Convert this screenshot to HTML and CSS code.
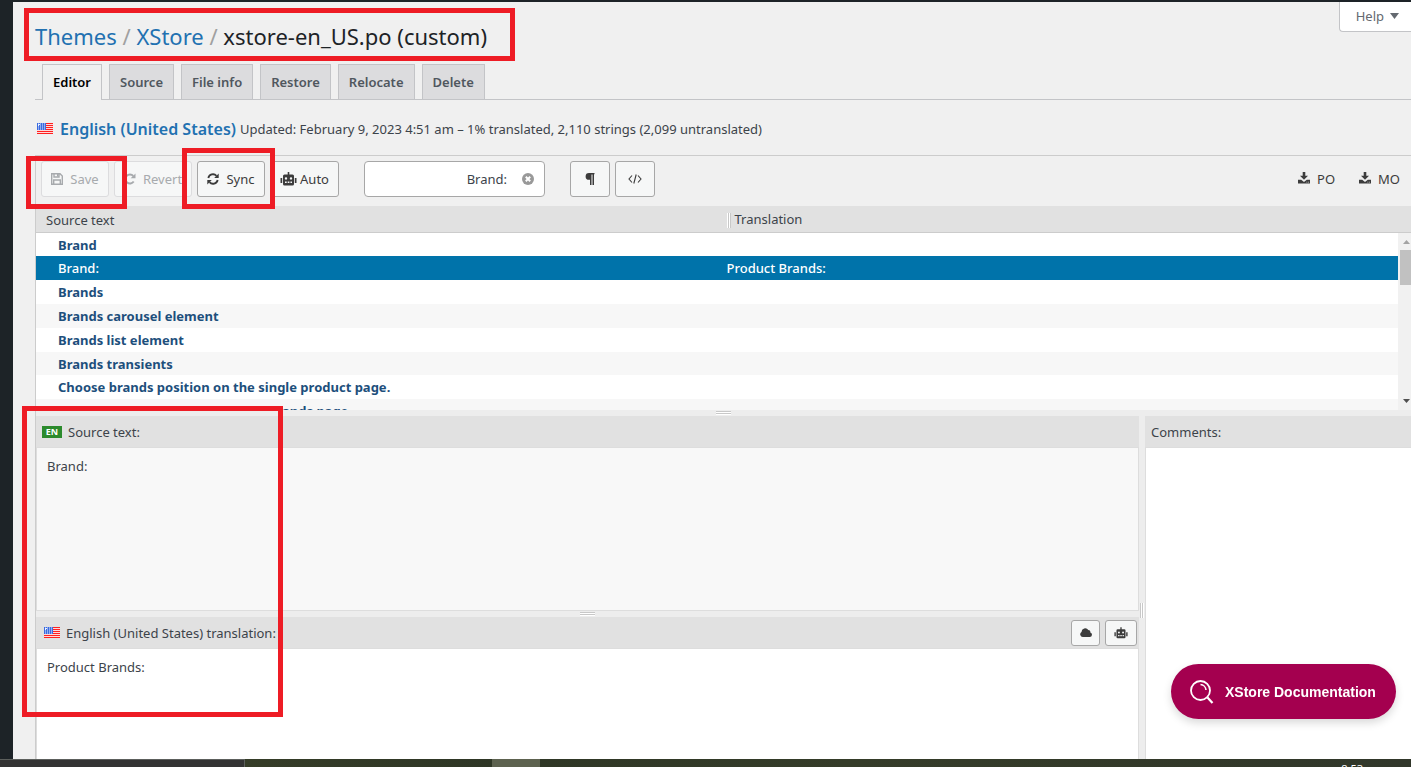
FILE: index.html
```html
<!DOCTYPE html>
<html lang="en">
<head>
<meta charset="utf-8">
<title>xstore-en_US.po (custom)</title>
<link rel="stylesheet" href="styles.css">
</head>
<body>
<svg class="defs" aria-hidden="true">
  <symbol id="robot" viewBox="0 0 17 14"><path d="M7.700 0h1.600v2.500h3.200a1.500 1.500 0 0 1 1.500 1.500v8a1.500 1.500 0 0 1-1.500 1.500h-8A1.500 1.500 0 0 1 3 12V4a1.500 1.500 0 0 1 1.500-1.500h3.200zM0.500 6h1.700v5H0.500zM14.800 6h1.700v5h-1.700zM6 5.200a1.200 1.200 0 1 0 0 2.400 1.200 1.200 0 0 0 0-2.400zm5 0a1.200 1.200 0 1 0 0 2.400 1.200 1.200 0 0 0 0-2.400zM5 9.500V11h1.700V9.500zm2.700 0V11h1.700V9.500zm2.700 0V11H12V9.500z" fill="currentColor" fill-rule="evenodd"/></symbol>
  <symbol id="download" viewBox="0 0 12 12"><path d="M4.700 0h2.600v3.800H10L6 7.800 2 3.800h2.700zM0 7.800h3.200L6 10l2.800-2.200H12V11.500H0zM8.500 9.700v.8h.8v-.8zm1.600 0v.8h.8v-.8z" fill="currentColor" fill-rule="evenodd"/></symbol>
</svg>
<div class="adminbar"></div>
<div class="shell">
  <nav class="sidebar" aria-label="Admin menu"></nav>
  <main class="content">
    <header class="top">
      <h1><a href="#">Themes</a> <span>/</span> <a href="#">XStore</a> <span>/</span> xstore-en_US.po (custom)</h1>
      <button class="help" type="button">Help <svg width="9" height="6" viewBox="0 0 9 6"><path d="M0 0h9L4.500 6z" fill="currentColor"/></svg></button>
    </header>
    <nav class="tabs">
      <a class="active" href="#">Editor</a><a href="#">Source</a><a href="#">File info</a><a href="#">Restore</a><a href="#">Relocate</a><a href="#">Delete</a>
    </nav>
    <div class="locale">
      <span class="flag"></span>
      <h2><a href="#">English (United States)</a></h2>
      <p>Updated: February 9, 2023 4:51 am – 1% translated, 2,110 strings (2,099 untranslated)</p>
    </div>
    <section class="editor">
      <div class="toolbar">
        <div class="group">
          <button type="button" disabled><svg width="12" height="12" viewBox="0 0 12 12"><path d="M.700.700h8.300l2.300 2.300v8.300H.700zM3 .700v3.300h5V.700M2.700 11V7h6.600v4" fill="none" stroke="currentColor" stroke-width="1.400"/><path d="M6 1h1.500v2.500H6z" fill="currentColor"/></svg>Save</button>
          <button class="revert" type="button" disabled><svg width="12" height="12" viewBox="0 0 12 12"><path d="M9.700 8.500A4.500 4.500 0 1 1 9.300 3" fill="none" stroke="currentColor" stroke-width="1.900"/><path d="M11.500.500v4.800H6.700z" fill="currentColor"/></svg>Revert</button>
          <button type="button"><svg width="12" height="12" viewBox="0 0 12 12"><path d="M1.300 5A4.800 4.800 0 0 1 9.500 2.800M10.700 7A4.800 4.800 0 0 1 2.500 9.200" fill="none" stroke="currentColor" stroke-width="1.800"/><path d="M11.700.500v4.500H7.200zM.300 11.500V7h4.500z" fill="currentColor"/></svg>Sync</button>
          <button class="auto" type="button"><svg width="17" height="14"><use href="#robot"/></svg>Auto</button>
        </div>
        <div class="search">
          <input type="text" value="Brand:" aria-label="Filter translations">
          <button type="button" aria-label="Clear filter"><svg width="12" height="12" viewBox="0 0 12 12"><circle cx="6" cy="6" r="6" fill="#999"/><path d="M3.800 3.800l4.400 4.400M8.200 3.800L3.800 8.200" stroke="#fff" stroke-width="2"/></svg></button>
        </div>
        <div class="group">
          <button class="square" type="button" aria-label="Toggle invisibles"><svg width="10" height="12" viewBox="0 0 10 12"><path d="M4 0h5.500v1.300H9V12H7.500V1.500h-1V12H5V6.800H4A3.400 3.400 0 0 1 4 0z" fill="currentColor"/></svg></button>
          <button class="square" type="button" aria-label="Toggle code view"><svg width="14" height="10" viewBox="0 0 14 10"><path d="M4 1.500L1 5l3 3.500M10 1.500L13 5l-3 3.500M8.200.500L5.800 9.500" fill="none" stroke="currentColor" stroke-width="1.100"/></svg></button>
        </div>
        <div class="downloads">
          <button type="button"><svg width="12" height="12"><use href="#download"/></svg>PO</button>
          <button type="button"><svg width="12" height="12"><use href="#download"/></svg>MO</button>
        </div>
      </div>
      <div class="list">
        <table>
          <thead><tr><th>Source text</th><th class="grip">Translation</th></tr></thead>
          <tbody>
            <tr><td>Brand</td><td></td></tr>
            <tr class="selected"><td>Brand:</td><td>Product Brands:</td></tr>
            <tr><td>Brands</td><td></td></tr>
            <tr><td>Brands carousel element</td><td></td></tr>
            <tr><td>Brands list element</td><td></td></tr>
            <tr><td>Brands transients</td><td></td></tr>
            <tr><td>Choose brands position on the single product page.</td><td></td></tr>
            <tr><td>Choose sidebars position on the brands page.</td><td></td></tr>
          </tbody>
        </table>
        <div class="scroll">
          <div class="track"><svg width="7" height="4" viewBox="0 0 7 4"><path d="M0 4h7L3.500 0z" fill="#a3a3a3"/></svg><i class="thumb"></i><svg width="7" height="4" viewBox="0 0 7 4"><path d="M0 0h7L3.500 4z" fill="#505050"/></svg></div>
        </div>
      </div>
      <div class="split"></div>
      <div class="panes">
        <div class="left">
          <div class="pane source">
            <div class="bar"><span class="lang">EN</span><label for="src">Source text:</label></div>
            <textarea id="src" readonly>Brand:</textarea>
          </div>
          <div class="split"></div>
          <div class="pane target">
            <div class="bar"><span class="flag"></span><label for="dst">English (United States) translation:</label>
              <div class="tools">
                <button type="button" aria-label="Cloud suggestions"><svg width="12" height="9" viewBox="0 0 12 9"><path d="M2.800 9A2.700 2.700 0 0 1 1.500 4 3.700 3.700 0 0 1 8.300 2 2.100 2.100 0 0 1 10.300 4.500 2.300 2.300 0 0 1 9.800 9z" fill="currentColor"/></svg></button>
                <button type="button" class="wide" aria-label="Auto-translate"><svg width="14" height="12"><use href="#robot"/></svg></button>
              </div>
            </div>
            <textarea id="dst">Product Brands:</textarea>
          </div>
        </div>
        <div class="vsplit"></div>
        <div class="pane comments">
          <div class="bar"><label for="com">Comments:</label></div>
          <textarea id="com"></textarea>
        </div>
      </div>
    </section>
  </main>
</div>
<footer class="taskbar"><div class="field"></div><div class="app"></div><time>8:53</time></footer>
<button class="docs" type="button"><svg width="24" height="24" viewBox="0 0 24 24"><g fill="none" stroke="#fff" stroke-width="1.800"><circle cx="10.500" cy="10.500" r="9.500"/><path d="M17.500 17.500l5 5.500" stroke-width="2.200"/><path d="M10.500 4.500a6 6 0 0 1 5.500 5.500" stroke-width="1.600"/></g></svg>XStore Documentation</button>
<div class="mark mark-title"></div>
<div class="mark mark-save"></div>
<div class="mark mark-sync"></div>
<div class="mark mark-panes"></div>
</body>
</html>
```

FILE: styles.css
```css
* { box-sizing: border-box; }
body {
  margin: 0;
  height: 100vh;
  display: flex;
  flex-direction: column;
  overflow: hidden;
  background: #f0f0f0;
  color: #3c434a;
  font: 13px/20px "Noto Sans", sans-serif;
}
button, input, textarea { font: inherit; color: inherit; margin: 0; }
button { cursor: pointer; }
svg { flex: none; display: block; }
a { color: #2271b1; text-decoration: none; }
.defs { position: absolute; width: 0; height: 0; }
.flag {
  flex: none;
  width: 16px;
  height: 11px;
  background:
    radial-gradient(circle, #e4ecff 0 1px, transparent 1px) 0 0 / 3px 3px no-repeat,
    linear-gradient(#3a6be0, #3a6be0) 0 0 / 9px 7px no-repeat,
    repeating-linear-gradient(#ff2020 0 1px, #ffd9d9 1px 2px);
}
.flag::before {
  content: "";
  display: block;
  width: 9px;
  height: 7px;
  background: repeating-linear-gradient(90deg, transparent 0 1px, rgba(255, 255, 255, .45) 1px 2px);
}

.adminbar { flex: none; height: 2px; background: #1d2327; }
.shell { flex: 1; min-height: 0; display: flex; }
.sidebar { flex: none; width: 13px; background: #1d2327; }
.content { flex: 1; min-width: 0; display: flex; flex-direction: column; padding-left: 22px; }

.top { display: flex; justify-content: space-between; align-items: flex-start; height: 62px; }
h1 { margin: 0; padding-top: 19px; font-size: 22px; line-height: 30px; font-weight: 400; color: #1d2327; }
h1 span { color: #a0a0a0; }
.help {
  display: flex; align-items: center; gap: 6px;
  height: 30px; padding: 0 12px 1px 16px;
  background: #fff; color: #646970;
  border: 1px solid #c3c4c7; border-width: 0 0 1px 1px; border-radius: 0 0 0 4px;
}

.tabs { display: flex; gap: 7px; height: 36px; padding-left: 7px; border-bottom: 1px solid #c3c4c7; }
.tabs a {
  height: 35px; padding: 0 10px; line-height: 34px;
  border: 1px solid #c3c4c7; border-bottom: 0;
  background: #dcdcde; color: #50575e; font-weight: 600;
}
.tabs .active { height: 36px; background: #f0f0f0; color: #000; }

.locale { display: flex; align-items: center; gap: 4px; height: 55px; padding: 2px 0 0 2px; }
.locale h2 { margin: 0 0 0 3px; font-size: 16px; line-height: 24px; font-weight: 600; }
.locale p { margin: 0; }

.editor { flex: 1; min-height: 0; display: flex; flex-direction: column; border: 1px solid #ccc; border-width: 1px 0 0 1px; }
.toolbar { flex: none; display: flex; gap: 25px; height: 50px; padding: 5px 11px 0 5px; }
.group { display: flex; gap: 5px; }
.toolbar button {
  display: flex; align-items: center; justify-content: center; gap: 7px;
  height: 36px; width: 68px; padding: 0;
  background: #f6f7f7; color: #3c3c3c;
  border: 1px solid #a7a7a7; border-radius: 3px;
}
.toolbar button:disabled { color: #a7aaad; border-color: #dcdcde; }
.toolbar .revert { width: 78px; }
.toolbar .auto { width: 69px; gap: 3px; }
.toolbar .square { width: 40px; }
.search { position: relative; display: flex; width: 181px; height: 36px; }
.search input { width: 100%; padding: 0 37px 0 10px; text-align: right; background: #fff; border: 1px solid #a7a7a7; border-radius: 4px; }
.toolbar .search button { position: absolute; right: 6px; top: 8px; width: 22px; height: 20px; border: 0; background: none; }
.downloads { margin-left: auto; display: flex; gap: 24px; }
.toolbar .downloads button { width: auto; border: 0; background: none; }
.downloads svg { margin-bottom: 3px; }

.list { flex: 204 1 0; min-height: 0; display: flex; align-items: flex-start; overflow: hidden; background: #fff; }
table { flex: 1; border-spacing: 0; table-layout: fixed; }
th { height: 27px; padding: 1px 10px 0; text-align: left; font-weight: 400; background: #e1e1e1; border-bottom: 1px solid #ccc; }
th:first-child { width: 50.7%; }
th.grip { width: auto; padding-left: 0; }
th.grip::before { content: ""; display: inline-block; width: 4px; height: 15px; margin: 0 4px 2px 0; vertical-align: middle; background: repeating-linear-gradient(90deg, #fff 0 1px, #c8c8c8 1px 2px); }
td { height: 24px; padding: 0; line-height: 22px; font-weight: 700; color: #1d4f7c; white-space: nowrap; }
td:first-child { padding-left: 22px; }
tbody tr:nth-child(5n+1) td { height: 23px; }
tbody tr:nth-child(even) { background: #f7f7f7; }
tbody tr.selected { background: #0073aa; }
.selected td { color: #fff; font-weight: 500; }
.scroll { flex: none; align-self: stretch; width: 13px; padding-top: 26px; background: #e1e1e1; }
.track { height: 100%; display: flex; flex-direction: column; align-items: flex-end; padding: 7px 1px 7px 2px; border-top: 1px solid #ccc; background: #f1f1f1; }
.thumb { flex: none; align-self: stretch; height: 35px; margin: 6px -1px auto 0; background: #c1c1c1; }

.split { flex: none; height: 6px; background: #ededed; display: flex; justify-content: center; align-items: center; }
.split::after { content: ""; width: 15px; height: 4px; background: repeating-linear-gradient(#c8c8c8 0 1px, #fff 1px 2px); }
.panes { flex: 343 1 0; min-height: 0; display: flex; }
.left { flex: 1103 1 0; display: flex; flex-direction: column; }
.vsplit { flex: none; width: 6px; display: flex; align-items: center; justify-content: center; background: #ededed; padding-top: 45px; }
.vsplit::after { content: ""; width: 4px; height: 15px; background: repeating-linear-gradient(90deg, #c8c8c8 0 1px, #fff 1px 2px); }
.pane { min-height: 0; display: flex; flex-direction: column; }
.source { flex: 195 1 0; }
.target { flex: 142 1 0; }
.comments { flex: 266 1 0; }
.bar { flex: none; display: flex; align-items: center; gap: 6px; height: 31px; padding: 0 2px 0 6px; background: #e1e1e1; }
.target .bar { padding-left: 8px; }
.lang { width: 20px; height: 12px; background: #2c8a2c; color: #fff; font-size: 9px; line-height: 12px; font-weight: 700; text-align: center; }
.pane textarea { flex: 1; width: 100%; min-height: 0; padding: 8px 10px; resize: none; border: 1px solid #ddd; border-radius: 0; background: #fff; outline: 0; }
.source textarea { background: #f8f8f8; }
.target textarea, .comments textarea { border-bottom: 0; }
.comments textarea { border-right: 0; }
.tools { margin-left: auto; display: flex; gap: 5px; }
.tools button { display: flex; align-items: center; justify-content: center; width: 29px; height: 26px; padding: 0; background: #f6f7f7; color: #3c3c3c; border: 1px solid #a7a7a7; border-radius: 3px; }
.tools .wide { width: 32px; }

.taskbar { flex: none; display: flex; height: 8px; overflow: hidden; background: linear-gradient(90deg, #3d432b, #2e3625 35%, #353c29 60%, #31372a); font-size: 11px; line-height: 16px; }
.field { width: 245px; background: #333; border: 1px solid #5c5f5c; border-left: 0; border-bottom: 0; }
.app { width: 48px; margin-left: 247px; background: #5d624f; }
.taskbar time { margin: 2px 48px 0 auto; color: #fff; }

.docs {
  position: fixed; right: 15px; bottom: 48px;
  display: flex; align-items: center; gap: 11px;
  width: 225px; height: 55px; padding: 0 0 0 19px;
  border: 0; border-radius: 28px; background: #a4004f; color: #fff;
  font: 700 14px/20px "Liberation Sans", Arial, sans-serif;
  box-shadow: 0 4px 8px rgba(0, 0, 0, .15);
}

.mark { position: absolute; border: 5px solid #ee1c25; pointer-events: none; }
.mark-title { left: 24px; top: 8px; width: 491px; height: 53px; }
.mark-save { left: 26px; top: 156px; width: 101px; height: 53px; }
.mark-sync { left: 182px; top: 148px; width: 93px; height: 61px; }
.mark-panes { left: 22px; top: 406px; width: 261px; height: 311px; }
```
